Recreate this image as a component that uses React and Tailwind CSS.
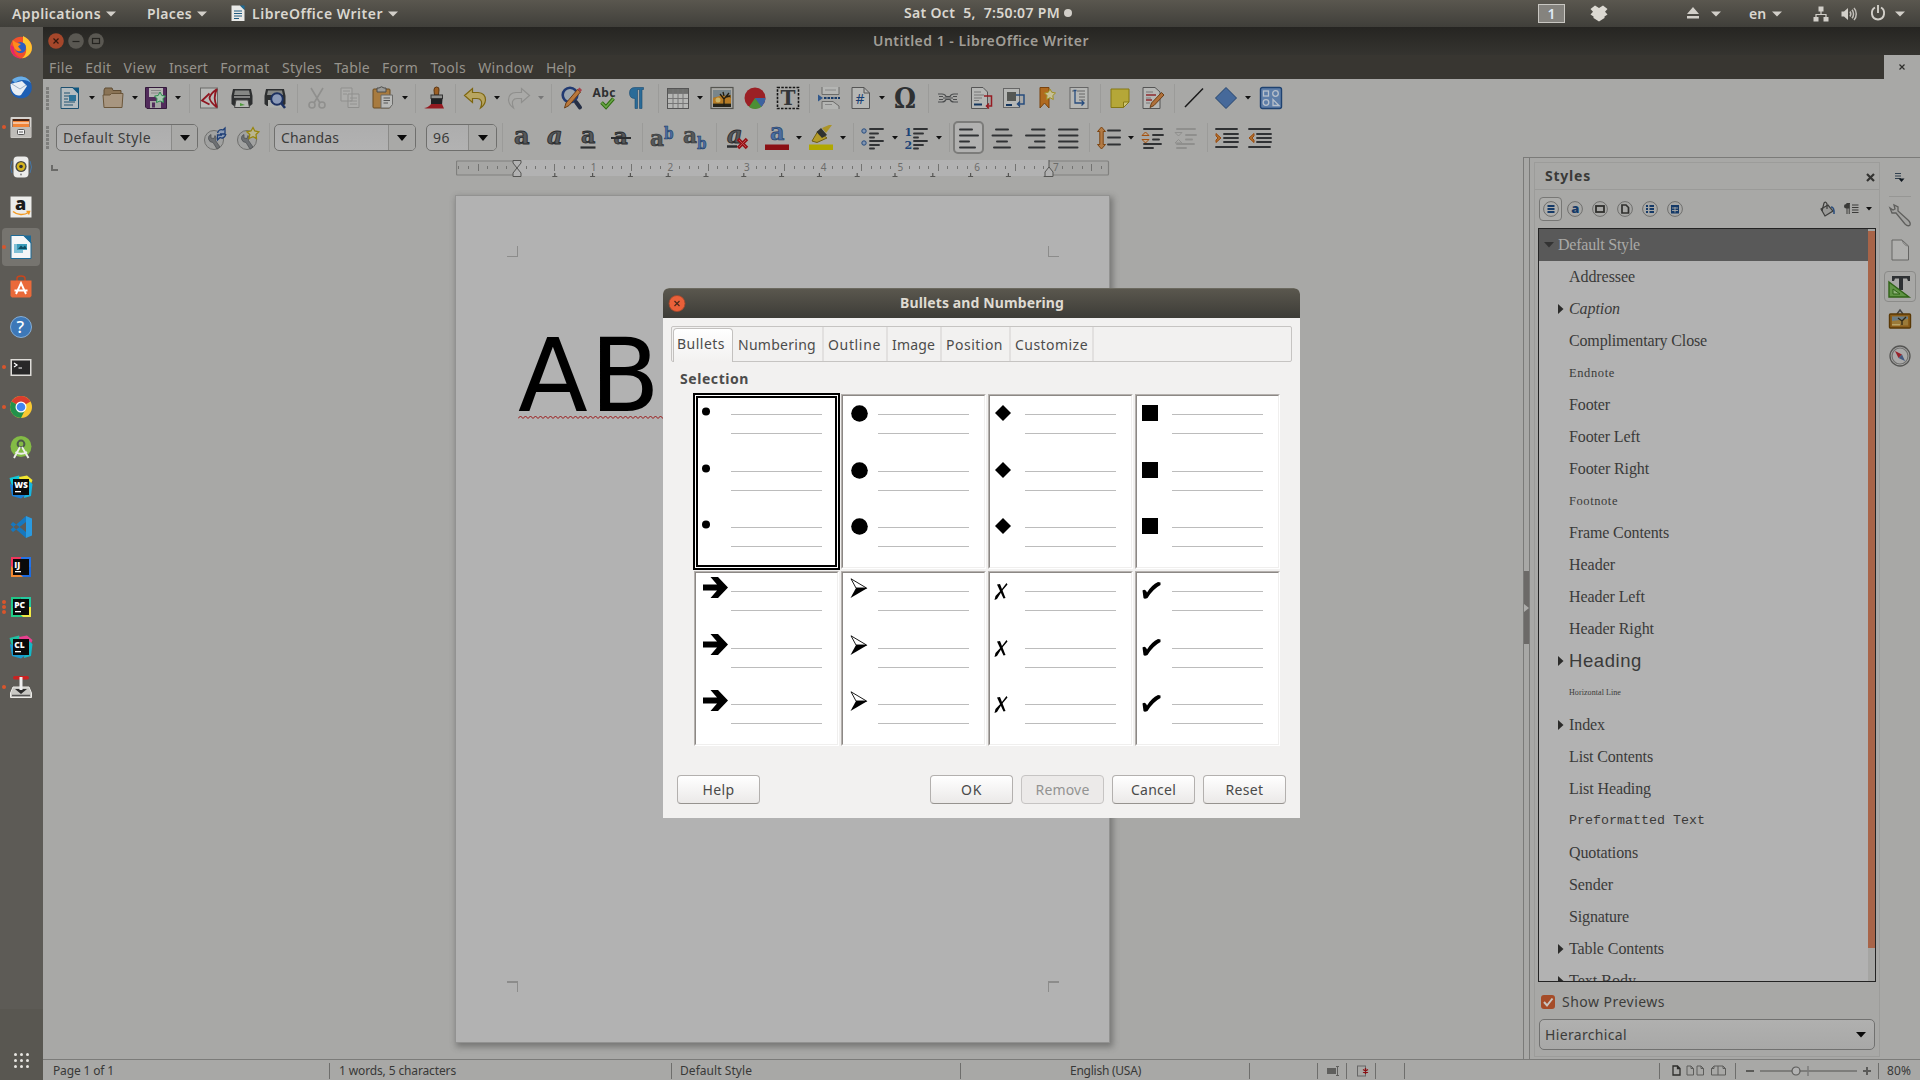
import React, { useLayoutEffect, useRef } from "react";

/* Text whose tracking is tuned so that the run takes exactly w pixels. */
function Fit({ w, className = "", children }) {
  const ref = useRef(null);
  useLayoutEffect(() => {
    const el = ref.current;
    el.style.letterSpacing = "0px";
    const natural = el.getBoundingClientRect().width;
    el.style.letterSpacing = (w - natural) / el.textContent.length + "px";
  }, [w]);
  return (
    <span ref={ref} className={"inline-block whitespace-pre " + className}>
      {children}
    </span>
  );
}

const Svg = ({ s = 24, h, vb = "0 0 24 24", className = "", children }) => (
  <svg width={s} height={h || s} viewBox={vb} fill="none" className={"block shrink-0 overflow-visible " + className}>
    {children}
  </svg>
);

/* ---------- top panel ---------- */

const Tri = ({ className = "" }) => (
  <Svg s={10} h={6} vb="0 0 10 6" className={className}>
    <path d="M0 0.5H10L5 5.5Z" fill="#d2cfc9" />
  </Svg>
);

function TopPanel() {
  return (
    <div className="flex h-[27px] shrink-0 items-center bg-linear-to-b from-[#5a574f] to-[#403f3a] text-[14px] leading-none font-semibold text-[#dad7d0]">
      <div className="flex w-[892px] items-center pl-[12px]">
        <Fit w={89}>Applications</Fit>
        <Tri className="ml-[5px]" />
        <Fit w={45} className="ml-[31px]">Places</Fit>
        <Tri className="ml-[5px]" />
        <Svg s={14} h={17} vb="0 0 14 17" className="ml-[24px]">
          <path d="M0.5 0.5H9L13.5 5V16H0.5Z" fill="#e9e9e7" />
          <path d="M9 0.5H13.5V5Z" fill="#1d6b97" />
          <path d="M3 6H11M3 8.5H11M3 11H11M3 13.500H8" stroke="#1d5a80" />
        </Svg>
        <Fit w={131} className="ml-[7px]">LibreOffice Writer</Fit>
        <Tri className="ml-[5px]" />
      </div>
      <div className="flex w-[646px] items-center pl-[12px]">
        <Fit w={156} className="-mt-[1px]">Sat Oct  5,  7:50:07 PM</Fit>
        <span className="-mt-[1px] ml-[4px] h-[8px] w-[8px] rounded-full bg-[#d2cfc9]" />
      </div>
      <div className="flex items-center">
        <span className="flex h-[19px] w-[27px] items-center justify-center border border-[#c9c7c2] bg-[#85837e] text-[#dfeaf5]">1</span>
        <Svg s={20} h={17} vb="0 0 20 17" className="ml-[24px]">
          <path d="M6 0.500L10 3L14 0.500L18.500 4L16 6.700L18.500 9.500L15.500 11.500V13L10 16.500L4.500 13V11.500L1.500 9.500L4 6.700L1.500 4Z" fill="#dcd9d2" />
        </Svg>
        <Svg s={12} h={12} vb="0 0 12 12" className="-mt-[2px] ml-[78px]">
          <path d="M6 0L12 7H0ZM0 9H12V11.500H0Z" fill="#d2cfc9" />
        </Svg>
        <Tri className="ml-[12px]" />
        <Fit w={17} className="ml-[28px]">en</Fit>
        <Tri className="ml-[6px]" />
        <Svg s={16} vb="0 0 16 16" className="ml-[31px]">
          <path d="M5.500 0.500H10.500V5.500H5.500ZM0.500 11H5.500V15.500H0.500ZM10.500 11H15.500V15.500H10.500Z" fill="#d2cfc9" />
          <path d="M8 5V8.500M3 11V8.500H13V11" stroke="#d2cfc9" strokeWidth="1.200" />
        </Svg>
        <Svg s={16} vb="0 0 16 16" className="ml-[12px]">
          <path d="M0.500 5.500H3L7 2V14L3 10.500H0.500Z" fill="#d2cfc9" />
          <path d="M9 5.500C10 7 10 9 9 10.500M11 3.800C13 6 13 10 11 12.200M13 2C16 5 16 11 13 14" stroke="#c2bfb9" strokeWidth="1.500" />
        </Svg>
        <Svg s={16} vb="0 0 16 16" className="-mt-[1px] ml-[13px]">
          <path d="M8 0V8" stroke="#d2cfc9" strokeWidth="1.900" />
          <path d="M5 2.500C0.500 5 0.500 14 8 14.500C15.500 14 15.500 5 11 2.500" stroke="#d2cfc9" strokeWidth="1.900" />
        </Svg>
        <Tri className="ml-[9px]" />
      </div>
    </div>
  );
}

/* ---------- dock ---------- */

const JB = ({ t, a, b, c, d, spiky }) => (
  <Svg>
    {spiky ? (
      <>
        <path d="M0.500 3L10 0.500L13 7L4 14Z" fill={a} />
        <path d="M10 2L18 0.500L23.500 5L20 14L12 10Z" fill={b} />
        <path d="M20 6L23.500 9L22 21L15 23L16 12Z" fill={c} />
        <path d="M1 9L8 12L18 19L12 23.500L3 21Z" fill={d} />
      </>
    ) : (
      <>
        <path d="M2 2H13L2 14Z" fill={a} />
        <path d="M12 2H22V14L12 10Z" fill={b} />
        <path d="M22 12V22H11L14 12Z" fill={c} />
        <path d="M2 11L14 22H2Z" fill={d} />
      </>
    )}
    <rect x="4" y="4" width="16" height="16" fill="#0a0a0a" />
    <text x="5.200" y="12.500" fontFamily="Open Sans, sans-serif" fontWeight="800" fontSize="8.500" fill="#fff">{t}</text>
    <rect x="6" y="16" width="6" height="1.300" fill="#fff" />
  </Svg>
);

const dock = [
  { i: <Svg className="-mt-[1px]">
      <circle cx="12" cy="12.500" r="10.800" fill="#f0512c" />
      <path d="M1.500 10C1 20 8 24 13 23.300C7 22 4 17 5 12Z" fill="#e5256b" />
      <path d="M14 1C22 5 24 11 22.500 16C21 20 18 22.500 13 23.300C19 19 18 10 14 8Z" fill="#ffc52f" />
      <circle cx="11.500" cy="12.500" r="5.500" fill="#2b5fc4" />
      <path d="M3.500 5L7 7.500L12 9L9 11.500L12.500 15.500C8 18 4 14 3.500 5Z" fill="#ff8a1c" />
    </Svg> },
  { i: <Svg className="-mt-[1px]">
      <circle cx="12" cy="12.500" r="10.800" fill="#1e5fb4" />
      <path d="M3 5C8 0 18 0 22 8C18 4 10 4 6 8Z" fill="#69aee8" />
      <path d="M1.500 9L13 6L18 11L12 20C7 22 2 18 1.500 9Z" fill="#e9eef4" />
      <path d="M3 9L11 14L17 10" stroke="#9fb2c8" />
    </Svg> },
  { n: 1, i: <Svg className="-mt-[1px]">
      <rect x="1.500" y="2" width="21" height="21" rx="1" fill="#d5d3cf" />
      <rect x="3.500" y="4" width="17" height="8" fill="#4b2413" />
      <path d="M4 6H20V12H4Z" fill="#f08437" /><path d="M4 8H20" stroke="#fff" />
      <rect x="2" y="12" width="20" height="10.500" fill="#bfbdb9" />
      <rect x="8.500" y="14.500" width="7" height="5" rx="1" fill="#f3f3f3" stroke="#555" /><path d="M10 17H14" stroke="#555" />
    </Svg> },
  { i: <Svg>
      <path d="M3 6Q0 12 3 18M21 6Q24 12 21 18" stroke="#4577a8" />
      <rect x="4.500" y="1.500" width="15" height="21" rx="4" fill="#ececea" />
      <circle cx="12" cy="11.500" r="5.600" fill="#4a4a44" /><circle cx="12" cy="11.500" r="4.200" fill="#d6b520" /><circle cx="12" cy="11.500" r="1.800" fill="#333" />
      <circle cx="12" cy="19.500" r="1" fill="#888" />
    </Svg> },
  { i: <Svg>
      <rect x="1.500" y="1.500" width="21" height="21" fill="#ececea" />
      <text x="6" y="15" fontFamily="Open Sans, sans-serif" fontWeight="800" fontSize="18" fill="#1b1b1b">a</text>
      <path d="M4 16.500C8 20 15 20.500 19.500 17.500M17.500 16.500H20.500L19.500 19.500" stroke="#f29a22" strokeWidth="1.500" />
    </Svg> },
  { n: 1, sel: 1, i: <Svg>
      <path d="M2 0.500H15L22 7.500V23.500H2Z" fill="#f4f6f7" stroke="#1d6b97" />
      <path d="M14 0.500H22V8.500Z" fill="#1d6b97" />
      <rect x="5" y="9" width="9" height="9" fill="#7fc0d6" /><rect x="8" y="9" width="10" height="6" fill="#3b9cba" />
      <path d="M9 14L12 10.500L14 12.500L16 10.500L18 14Z" fill="#0f4b60" />
    </Svg> },
  { i: <Svg>
      <path d="M8 6V3.500Q8 1 12 1Q16 1 16 3.500V6" stroke="#c8451c" strokeWidth="1.500" />
      <path d="M1.500 5.500H22.500V21L21 22.500H3L1.500 21Z" fill="#ea6a3a" />
      <path d="M7 19L12 8L17 19M5.500 15.500H18.500" stroke="#fff" strokeWidth="1.900" />
    </Svg> },
  { i: <Svg>
      <circle cx="12" cy="12" r="10.500" fill="#3d78b8" stroke="#86aed6" />
      <text x="7.500" y="18" fontFamily="Noto Sans, sans-serif" fontSize="17" fontWeight="500" fill="#fff">?</text>
    </Svg> },
  { n: 1, i: <Svg>
      <rect x="1.500" y="4" width="21" height="17" fill="#dedcd8" /><rect x="3" y="5.500" width="18" height="14" fill="#282828" />
      <path d="M5 8L8 10L5 12M9.500 13H13" stroke="#fff" strokeWidth="1.200" />
    </Svg> },
  { n: 1, i: <Svg>
      <circle cx="12" cy="12" r="11" fill="#f9c932" />
      <path d="M12 12L2.500 6.500A11 11 0 0 1 21.500 6.500Z" fill="#d93d2e" />
      <path d="M12 12L2.500 6.500A11 11 0 0 0 12 23L16.500 14Z" fill="#23914b" />
      <circle cx="12" cy="12" r="5.500" fill="#fff" /><circle cx="12" cy="12" r="4.300" fill="#4285f0" />
    </Svg> },
  { i: <Svg>
      <circle cx="12" cy="11.500" r="10.500" fill="#83bb45" />
      <circle cx="12" cy="9" r="3.400" stroke="#4c5a4a" strokeWidth="2" />
      <path d="M11 12L5 23M13 12L19.500 23M6.500 17Q12 20.500 18 17" stroke="#eeeeec" strokeWidth="1.900" />
    </Svg> },
  { i: <JB t="WS" a="#10c8d8" b="#f1e52f" c="#17b5e0" d="#1a80d8" spiky /> },
  { i: <Svg>
      <path d="M17 1L23 3.500V20.500L17 23Z" fill="#2a9ae0" />
      <path d="M17 1L1.500 14.500L4 17L17 7ZM17 23L1.500 9.500L4 7L17 17Z" fill="#1678bf" />
    </Svg> },
  { i: <JB t="IJ" a="#f0365c" b="#2473e8" c="#1d6be0" d="#f58a32" /> },
  { n: 3, i: <JB t="PC" a="#20c587" b="#24c8a0" c="#f0ea45" d="#20cf88" /> },
  { i: <JB t="CL" a="#1fc0a2" b="#e83f8e" c="#14b8c8" d="#1a9cd0" spiky /> },
  { n: 1, i: <Svg className="-mt-[1px]">
      <path d="M4 12H20L22.500 18V22.500H1.500V18Z" fill="#c9c8c4" stroke="#ecebe8" />
      <rect x="4" y="1" width="16" height="3.500" rx="1.700" fill="#c92222" />
      <path d="M6 14H18L12 19Z" fill="#2d2d2d" /><path d="M12 2V15" stroke="#efefef" strokeWidth="3" />
      <path d="M3 20.500H21" stroke="#555" strokeWidth="1.500" />
    </Svg> },
];

function Dock() {
  return (
    <div className="flex w-[43px] shrink-0 flex-col bg-[#5d5b56]">
      {dock.map((d, k) => (
        <div key={k} className="flex h-[40px] items-center pl-[2px]">
          <div className={"flex h-[38px] w-[38px] items-center rounded-[4px] " + (d.sel ? "bg-[#76746f]" : "")}>
            <span className="flex w-[7px] flex-col gap-[1px]">
              {Array.from({ length: d.n || 0 }, (_, j) => (
                <span key={j} className="h-[4px] w-[4px] rounded-full bg-[#d9552c]" />
              ))}
            </span>
            {d.i}
          </div>
        </div>
      ))}
      <div className="mt-auto flex h-[71px] items-end justify-center bg-[#595751] pb-[12px]">
        <div className="grid grid-cols-3 gap-[3px]">
          {Array.from({ length: 9 }, (_, k) => (
            <span key={k} className="h-[3px] w-[3px] rounded-full bg-[#e8e6e2]" />
          ))}
        </div>
      </div>
    </div>
  );
}

/* ---------- toolbar pieces ---------- */

const Cell = ({ children, className = "w-[33px]" }) => <span className={"flex shrink-0 items-center justify-center " + className}>{children}</span>;
const Arr = ({ dim, wide }) => (
  <Cell className={wide ? "w-[12px]" : "w-[11px]"}>
    <Svg s={6} h={4} vb="0 0 6 4"><path d="M0 0H6L3 3.500Z" fill={dim ? "#777" : "#111"} /></Svg>
  </Cell>
);
const Group = ({ className, children }) => (
  <div className={"flex h-[29px] shrink-0 items-center border-l border-[#9b9b99] pl-[2px] " + className}>{children}</div>
);
const Handle = () => (
  <div className="ml-[3px] flex w-[3px] flex-col gap-[1px]">
    {Array.from({ length: 6 }, (_, k) => <span key={k} className="h-[3px] w-[3px] bg-[#7e7e7c]" />)}
  </div>
);
const Doc = ({ children, x = 4, w = 16 }) => (
  <><rect x={x} y="2" width={w} height="20" fill="#b9bab8" stroke="#6b6b69" />{children}</>
);

const I = {
  neu: <Svg><path d="M3 1.500H15L20.500 7V22.500H3Z" fill="#b4bcc0" stroke="#1e506f" /><path d="M14 1.500H21V8.500Z" fill="#0f5780" /><path d="M6 7H12M6 10H17M6 13H10M6 16H17M6 19H15" stroke="#1e506f" /><rect x="11" y="9" width="7" height="6" fill="#2b7298" /></Svg>,
  open: <Svg><path d="M3 4L4 2H11L12 4.500H20V10H3Z" fill="#8a7355" stroke="#5f4c33" /><path d="M2 9H9L10.500 7.500H22L21 21.500H3Z" fill="#a89680" stroke="#6b563a" /></Svg>,
  save: <Svg><path d="M1.500 1.500H22.500V22.500H3L1.500 21Z" fill="#512b5b" stroke="#331a3a" /><rect x="5" y="2" width="14" height="9" fill="#b5b5b3" /><path d="M7 4.500H17M7 7H17" stroke="#888" /><rect x="6" y="15" width="11" height="7" fill="#a5a5a3" /><rect x="8" y="16.500" width="3" height="5" fill="#512b5b" /><path d="M16 6L17.800 9.500L21.500 10L19 12.700L19.500 16.500L16 15L12.500 16.500L13 12.700L10.500 10L14.200 9.500Z" fill="#a9c9b2" stroke="#2c8c4e" /></Svg>,
  pdf: <Svg><Doc x={3.5} w={17} /><path d="M20 3Q13 8 12.500 12Q13 16 20 21.500M20 3Q15.500 11 20 21.500M12.500 7.500L5 14.500L12.500 18.500" stroke="#8f1620" strokeWidth="1.800" /></Svg>,
  print: <Svg><path d="M3 3H21L22.500 10V18L20 20H4L1.500 18V10Z" fill="#2d2f30" /><path d="M5 4.500H19L20 9H4Z" fill="#858785" /><path d="M4 11H20" stroke="#9fa19f" strokeWidth="1.500" /><path d="M6 14H18L19.500 21.500H4.500Z" fill="#b7b9b6" stroke="#444" /><path d="M10 17L15 19L10 20Z" fill="#4e9a3c" /></Svg>,
  preview: <Svg><path d="M3 3H21L22.500 10V18L20 20H4L1.500 18V10Z" fill="#2d2f30" /><path d="M5 4.500H19L20 9H4Z" fill="#858785" /><path d="M5 14H19V21.500H5Z" fill="#b0b2af" /><circle cx="14" cy="13" r="5.800" fill="#8b9ab8" stroke="#1d3161" strokeWidth="2" /><path d="M18 17L22 22" stroke="#1d3161" strokeWidth="2.500" /></Svg>,
  cut: <Svg><path d="M6 2L15 17M18 2L9 17" stroke="#8f8f8d" strokeWidth="1.600" /><circle cx="7" cy="19" r="3" stroke="#8f8f8d" strokeWidth="1.600" /><circle cx="17" cy="19" r="3" stroke="#8f8f8d" strokeWidth="1.600" /></Svg>,
  copy: <Svg><path d="M3 2H14V15H3ZM10 8H21V21.500H10Z" fill="#adadab" stroke="#8f8f8d" /><path d="M5 5H12M5 8H9M12 12H19M12 15H19M12 18H19" stroke="#929290" /></Svg>,
  paste: <Svg><rect x="2" y="3" width="17" height="19" rx="1" fill="#a87b3f" stroke="#6a4c22" /><path d="M6 2H8Q10.500 -0.500 13 2H15V6H6Z" fill="#9a9b99" stroke="#4d4d4b" /><path d="M10 9H21.500V18.500L18.500 22H10Z" fill="#b9bab8" stroke="#6b6b69" /><path d="M12.500 12H19M12.500 14.500H19M12.500 17H17" stroke="#555" /></Svg>,
  brush: <Svg><path d="M13.500 1Q16.500 1 16 4L15.500 9H11.500L11 4Q11 1 13.500 1Z" fill="#9c5f24" stroke="#5c3510" /><rect x="8" y="9" width="11.500" height="3.500" fill="#8f8f8d" stroke="#333" /><path d="M8 13H19.500L19 19H8Z" fill="#1f2022" /><path d="M1 22C6 21.500 8 18 8 18L19 18L21 22.500H3Z" fill="#941a20" /></Svg>,
  undo: <Svg><path d="M1.500 9.500L9.500 2.500V6.500H15Q22.500 7 22.500 14Q22 19 17.500 22Q19.500 17 18 14.500Q17 12.500 14 12.500H9.500V16.500Z" fill="#b8a560" stroke="#7d6610" strokeWidth="1.200" /></Svg>,
  redo: <Svg><path d="M22.500 9.500L14.500 2.500V6.500H9Q1.500 7 1.500 14Q2 19 6.500 22Q4.500 17 6 14.500Q7 12.500 10 12.500H14.500V16.500Z" fill="#aaaaa8" stroke="#8f8f8d" strokeWidth="1.200" /></Svg>,
  find: <Svg><circle cx="11" cy="9" r="7.300" fill="#9ba5ae" stroke="#213a72" strokeWidth="2.600" /><path d="M17 16L21 21.500" stroke="#262f45" strokeWidth="4" strokeLinecap="round" /><path d="M5.500 22L7 17L18.500 3.500L21.500 6L10 19.500Z" fill="#b9783c" stroke="#6b3f17" /><path d="M18.500 3.500L20.500 1.500L23 4L21.500 6Z" fill="#a8444a" /></Svg>,
  abc: <Svg><text x="0.500" y="10.500" fontFamily="Noto Sans, sans-serif" fontWeight="700" fontSize="12" textLength="23" fill="#2e2f31">Abc</text><path d="M9.500 16.500L14 21L21.500 12.500" stroke="#2f6d10" strokeWidth="3.600" /><path d="M9.500 16.500L14 21L21.500 12.500" stroke="#6aa548" strokeWidth="1.600" /></Svg>,
  para: <Svg><path d="M18.500 1.500V3.500H17V22.500H14.500V3.500H12.500V22.500H10V12.500Q4.500 12.500 4.500 7Q4.500 1.500 10 1.500Z" fill="#2a6b98" stroke="#1a4a70" strokeWidth=".6" /></Svg>,
  table: <Svg><rect x="1.500" y="2.500" width="21" height="20" fill="#b6b7b5" stroke="#555" /><rect x="2" y="3" width="20" height="4" fill="#6f706e" /><path d="M2 7.500H22M2 12.500H22M2 17.500H22M7 3V22M12 3V22M17 3V22" stroke="#777" /></Svg>,
  image: <Svg><rect x="1" y="1.500" width="22" height="21" fill="#a9a9a5" stroke="#555550" strokeWidth="1.200" /><rect x="3" y="4" width="18" height="17" fill="#7c5c20" /><path d="M3 4H21V9L3 12Z" fill="#79868c" /><path d="M3 12L13 9L21 12V17H3Z" fill="#b57a25" /><circle cx="8" cy="14" r="2.500" fill="#c9b268" /><path d="M3 18H21V21H3Z" fill="#25231a" /><path d="M14 20V13L10 8M14 13L19 7M14 10L13 6M16 11L20 10" stroke="#211d12" strokeWidth="1.300" /></Svg>,
  pie: <Svg><circle cx="12" cy="12" r="10.500" fill="#9b2025" /><path d="M12 12L22.500 13A10.500 10.500 0 0 1 18 20.500Z" fill="#3d63a0" /><path d="M12 12L19 20.500A10.500 10.500 0 0 1 6 21Z" fill="#4d8f35" /><path d="M12 12H22.500L18.500 21Z" fill="#3d63a0" /></Svg>,
  tbox: <Svg><rect x="1.500" y="1.500" width="21" height="21" stroke="#151515" strokeWidth="1.600" strokeDasharray="2.500 1.300" /><text x="4.500" y="19" fontFamily="DejaVu Serif, serif" fontWeight="700" fontSize="20" textLength="15" lengthAdjust="spacingAndGlyphs" fill="#343638">T</text></Svg>,
  pbreak: <Svg><path d="M5 1V8.500H22V1M5 23V15.500H16L22 20V23" fill="#b4b5b3" stroke="#6b6b69" /><path d="M8 4H19M8 18.500H15" stroke="#888" /><path d="M1 8.500L6 12L1 15.500Z" fill="#31588c" /><path d="M7 12H23" stroke="#193b68" strokeWidth="2" strokeDasharray="2.500 1" /></Svg>,
  field: <Svg><path d="M3 1.500H15L20.500 7V22.500H3Z" fill="#b6b7b5" stroke="#555" /><path d="M15 1.500V7H20.500" stroke="#555" /><text x="6.500" y="18" fontFamily="Noto Sans, sans-serif" fontSize="14" fill="#173f74">#</text></Svg>,
  omega: <Svg><text x="1" y="22" fontFamily="DejaVu Serif, serif" fontWeight="700" fontSize="27" textLength="22" lengthAdjust="spacingAndGlyphs" fill="#2e3032">Ω</text></Svg>,
  link: <Svg><path d="M2 8H6Q9 8 10 10.500L14 10.500Q15 8 18 8H22M2 16H6Q9 16 10 13.500L14 13.500Q15 16 18 16H22M7 12H17M3 10.500H7M17 10.500H21M3 13.500H7M17 13.500H21" stroke="#4b4d4e" strokeWidth="1.200" /></Svg>,
  foot: <Svg><path d="M2.500 1.500H14L18.500 6V22.500H2.500Z" fill="#b6b7b5" stroke="#555" /><path d="M5 6H12M5 9H15M5 12H13M5 14.500H10" stroke="#777" /><path d="M5 18.500H13" stroke="#14365f" strokeWidth="2" /><path d="M15 10H22.500V20H18M20 17.500L17.500 20L20 22.500" stroke="#961b22" strokeWidth="1.500" /></Svg>,
  endn: <Svg><rect x="1.500" y="2.500" width="16" height="19" fill="#b6b7b5" stroke="#666" /><rect x="5" y="6" width="9" height="9" fill="#555753" /><path d="M4 19H10" stroke="#14365f" strokeWidth="2" /><path d="M14 9H22V18H16M18 15.500L15.500 18L18 20.500" stroke="#274c7d" strokeWidth="1.500" /></Svg>,
  mark: <Svg className="ml-[3px]"><path d="M4 1.500H13V22L8.500 17L4 22Z" fill="#b06a1f" stroke="#7a430c" /><path d="M14 3L15.700 6.200L19.500 7L16.800 9.500L17.300 13.500L14 11.700L10.500 13.500L11 9.500L8.500 7L12.300 6.200Z" fill="#c6c19a" stroke="#a09020" /></Svg>,
  cross: <Svg><rect x="3" y="1.500" width="18" height="21" fill="#b6b7b5" stroke="#666" /><path d="M10 5H18M12 8H18M12 11H18M12 14H18M5 5H7" stroke="#666" /><path d="M6.500 4.500H9.500M8 5V17H17M14.500 14.500L17 17L14.500 19.500" stroke="#274c7d" strokeWidth="1.300" /></Svg>,
  note: <Svg><path d="M3 3H21V16L15.500 21.500H3Z" fill="#b5a738" stroke="#857814" /><path d="M21 16H15.500V21.500Z" fill="#cec676" stroke="#857814" /></Svg>,
  track: <Svg><path d="M2 1.500H14L19 6V22.500H2Z" fill="#b6b7b5" stroke="#555" /><path d="M5 6H12M5 12H10M5 17H9M13 15H17" stroke="#777" /><path d="M5 9H15M5 14H11" stroke="#8f2b2f" strokeWidth="1.500" /><path d="M9 21.500L10.500 17L20.500 6.500L23 9L13 19.500Z" fill="#b0703a" stroke="#6b3f17" /></Svg>,
  line: <Svg><path d="M3 21L21 2.500" stroke="#191919" strokeWidth="1.500" /></Svg>,
  dia: <Svg><path d="M12 1.500L22.500 12L12 22.500L1.500 12Z" fill="#46699a" stroke="#24446f" /></Svg>,
  shapes: <Svg><rect x="1.500" y="1.500" width="21" height="21" rx="2" fill="#5e7ea8" stroke="#1f4270" strokeWidth="1.400" /><g stroke="#b7c0cb" strokeWidth="1.300"><rect x="4.500" y="5" width="5" height="5" /><circle cx="16.500" cy="7.500" r="2.800" /><circle cx="7" cy="16.500" r="2.800" /><path d="M14 19.500V13.500L20 19.500Z" /></g></Svg>,
};

const A = ({ t, italic, children, size = 24, x = 4, fill = "#55585a", y = 19 }) => (
  <Svg>
    <text x={x} y={y} fontFamily="DejaVu Serif, serif" fontWeight="700" fontStyle={italic ? "italic" : "normal"} fontSize={size} fill={fill} stroke="#2b2d2f" strokeWidth=".9">{t}</text>
    {children}
  </Svg>
);
const Bars = ({ list }) => (
  <Svg>
    {list.map(([x1, x2], k) => (
      <path key={k} d={`M${x1} ${3.5 + k * 6}H${x2}`} stroke="#303234" strokeWidth="2" strokeLinecap="round" />
    ))}
  </Svg>
);
const ln = (pts, c = "#303234") => pts.map(([x, y, w], k) => <path key={k} d={`M${x} ${y}h${w}`} stroke={c} strokeWidth="1.9" strokeLinecap="round" />);

const Wrench = () => (
  <>
    <circle cx="11" cy="14" r="9.500" fill="#a1a2a1" stroke="#6f6f6d" />
    <path d="M5.500 13Q5 9.500 8 8.500L8 12L11 12.500L12 9.500Q14 12 12.500 14.500L17 21L14 23L10 16.500Q6.500 16.500 5.500 13Z" fill="#6d7073" stroke="#4a4d50" strokeWidth=".7" />
  </>
);

const F = {
  upd: <Svg><Wrench /><path d="M14.500 7Q16 2.500 20 4L22 2V8H17M23 8Q21 13.500 17 11.500L14.500 14V9H19" stroke="#1d3d75" strokeWidth="1.300" fill="#8c9cb5" /></Svg>,
  neu: <Svg><Wrench /><path d="M17 1.500L18.800 5L22.800 5.800L20 8.500L20.500 12.500L17 10.700L13 12.500L13.800 8.500L11 5.800L15 5Z" fill="#b9b590" stroke="#97850d" strokeWidth="1.300" /></Svg>,
  clear: <A t="a" italic size={24} x={2} y={17}><path d="M2 20.500H12" stroke="#2b2d2f" strokeWidth="2.500" /><path d="M13 13L22 22M22 13L13 22" stroke="#951318" strokeWidth="3.500" /><path d="M14 14L21 21M21 14L14 21" stroke="#c14a4e" strokeWidth="1" /></A>,
  sup: <Svg><text x="0" y="20" fontFamily="DejaVu Serif, serif" fontWeight="700" fontSize="22" textLength="14" lengthAdjust="spacingAndGlyphs" fill="#55585a" stroke="#2b2d2f" strokeWidth=".6">a</text><text x="14" y="13" fontFamily="DejaVu Serif, serif" fontWeight="700" fontSize="17" textLength="9.500" lengthAdjust="spacingAndGlyphs" fill="#4a6da0" stroke="#183763" strokeWidth=".6">b</text></Svg>,
  sub: <Svg><text x="0" y="17" fontFamily="DejaVu Serif, serif" fontWeight="700" fontSize="22" textLength="14" lengthAdjust="spacingAndGlyphs" fill="#55585a" stroke="#2b2d2f" strokeWidth=".6">a</text><text x="14" y="23" fontFamily="DejaVu Serif, serif" fontWeight="700" fontSize="17" textLength="9.500" lengthAdjust="spacingAndGlyphs" fill="#4a6da0" stroke="#183763" strokeWidth=".6">b</text></Svg>,
  color: <Svg h={26} vb="0 -1 24 26"><text x="5" y="13.500" fontFamily="DejaVu Serif, serif" fontWeight="700" fontSize="24" textLength="14.500" lengthAdjust="spacingAndGlyphs" fill="#4a6da0" stroke="#183763" strokeWidth=".6">a</text><rect x="0" y="18.500" width="24" height="5.500" fill="#8b1014" /></Svg>,
  hi: <Svg h={26} vb="0 -1 24 26"><path d="M3 15L9 5L18 12L8 16.500Z" fill="#b49b28" stroke="#6f5e10" /><path d="M7.500 6L12 2L18 9L13 12Z" fill="#30322f" /><path d="M13 2L20 -1H23L17 7Z" fill="#ab9428" /><rect x="0" y="18.500" width="24" height="5.500" fill="#b0a800" /></Svg>,
  bul: <Svg><circle cx="3" cy="5" r="2.200" fill="#8295b1" stroke="#274c7d" /><circle cx="3" cy="17" r="2.200" fill="#8295b1" stroke="#274c7d" />{ln([[9, 3, 13], [9, 7.5, 8], [9, 11.5, 4], [9, 15, 13], [9, 19, 9], [9, 22.5, 4]])}</Svg>,
  num: <Svg><g fontFamily="DejaVu Serif, serif" fontWeight="700" fontSize="11" fill="#1d4477"><text x="-0.500" y="9.500">1</text><text x="-0.500" y="23">2</text></g>{ln([[9, 3, 13], [9, 7.5, 9], [9, 11.5, 4], [9, 15, 13], [9, 19, 9], [9, 22.5, 4]])}</Svg>,
  sp: <Svg><path d="M4.500 1L8.500 5.500H6.200V18.500H8.500L4.500 23L0.500 18.500H2.800V5.500H0.500Z" fill="#b27b46" stroke="#7d4511" />{ln([[11, 4.5, 12], [11, 11.5, 12], [11, 18.5, 12]])}</Svg>,
  spi: <Svg><path d="M4.500 6L8 9.500H1ZM4.500 17L8 13.500H1Z" fill="#b8a48c" stroke="#a3500f" />{ln([[3, 3, 18], [12, 9, 10], [12, 13.500, 6], [3, 18, 17], [3, 22, 9]])}</Svg>,
  spd: <Svg><path d="M4.500 10L8 6.500H1ZM4.500 13.500L8 17H1Z" stroke="#8f8f8d" />{ln([[3, 3, 18], [12, 9, 10], [12, 13.500, 6], [3, 18, 17], [3, 22, 9]], "#8f8f8d")}</Svg>,
  inc: <Svg><path d="M1 7.500L6 12L1 16.500V14L3 12L1 10Z" fill="#b07030" stroke="#9a4a0c" />{ln([[1, 3, 21], [9, 8, 14], [9, 12, 14], [9, 16, 14], [1, 21, 21]])}</Svg>,
  dec: <Svg><path d="M6 7.500L1 12L6 16.500V14L4 12L6 10Z" fill="#b07030" stroke="#9a4a0c" />{ln([[1, 3, 21], [9, 8, 14], [9, 12, 14], [9, 16, 14], [1, 21, 21]])}</Svg>,
};

const Combo = ({ className, btn, children }) => (
  <div className={"flex h-[27px] shrink-0 items-center rounded-[5px] border border-[#6f6f6d] bg-linear-to-b from-[#adadad] to-[#b2b2b2] text-[14px] text-[#3b3b3a] " + className}>
    <span className="flex-1 pl-[6px]">{children}</span>
    <span className={"flex h-full items-center justify-center rounded-r-[4px] border-l border-[#8a8a88] bg-[#a9a9a7] " + btn}>
      <Svg s={10} h={6} vb="0 0 10 6"><path d="M0 0H10L5 6Z" fill="#0a0a0a" /></Svg>
    </span>
  </div>
);

function Toolbars() {
  return (
    <>
      <div className="flex h-[39px] shrink-0 items-center pb-[1px]">
        <div className="flex w-[146px] items-center">
          <Handle />
          <Cell className="ml-[5px] w-[32px]">{I.neu}</Cell><Arr />
          <Cell className="w-[32px]">{I.open}</Cell><Arr />
          <Cell className="w-[32px]">{I.save}</Cell><Arr />
        </div>
        <Group className="w-[108px]"><Cell>{I.pdf}</Cell><Cell>{I.print}</Cell><Cell>{I.preview}</Cell></Group>
        <Group className="w-[118px]"><Cell>{I.cut}</Cell><Cell>{I.copy}</Cell><Cell>{I.paste}</Cell><Arr /></Group>
        <Group className="w-[40px]"><Cell>{I.brush}</Cell></Group>
        <Group className="w-[96px]"><Cell>{I.undo}</Cell><Arr /><Cell>{I.redo}</Cell><Arr dim /></Group>
        <Group className="w-[107px]"><Cell>{I.find}</Cell><Cell>{I.abc}</Cell><Cell>{I.para}</Cell></Group>
        <Group className="w-[151px]"><Cell>{I.table}</Cell><Arr /><Cell>{I.image}</Cell><Cell>{I.pie}</Cell><Cell>{I.tbox}</Cell></Group>
        <Group className="w-[119px]"><Cell>{I.pbreak}</Cell><Cell className="w-[31px]">{I.field}</Cell><Arr wide /><Cell>{I.omega}</Cell></Group>
        <Group className="w-[172px]"><Cell>{I.link}</Cell><Cell>{I.foot}</Cell><Cell>{I.endn}</Cell><Cell>{I.mark}</Cell><Cell className="w-[32px]">{I.cross}</Cell></Group>
        <Group className="w-[74px]"><Cell>{I.note}</Cell><Cell>{I.track}</Cell></Group>
        <Group className="w-[120px]"><Cell>{I.line}</Cell><Cell className="w-[32px]">{I.dia}</Cell><Arr wide /><Cell>{I.shapes}</Cell></Group>
      </div>
      <div className="flex h-[39px] shrink-0 items-center">
        <div className="flex w-[226px] items-center">
          <Handle />
          <Combo className="ml-[7px] w-[142px]" btn="w-[26px]"><Fit w={88}>Default Style</Fit></Combo>
          <Cell>{F.upd}</Cell><Cell>{F.neu}</Cell>
        </div>
        <Group className="w-[233px]">
          <Combo className="ml-[2px] w-[142px]" btn="w-[27px]"><Fit w={58}>Chandas</Fit></Combo>
          <Combo className="ml-[10px] w-[71px]" btn="w-[28px]"><Fit w={17}>96</Fit></Combo>
        </Group>
        <Group className="w-[140px]">
          <Cell><A t="a" y={18} /></Cell>
          <Cell><A t="a" y={18} italic /></Cell>
          <Cell><A t="a" size={22} x={5} y={17}><path d="M4.500 21.500H19.500" stroke="#2b2d2f" strokeWidth="2.200" /></A></Cell>
          <Cell><A t="a" size={22} x={4.5} y={18}><path d="M2 12H22" stroke="#2b2d2f" strokeWidth="2" /></A></Cell>
        </Group>
        <Group className="w-[74px]"><Cell>{F.sup}</Cell><Cell>{F.sub}</Cell></Group>
        <Group className="w-[41px]"><Cell className="w-[35px]">{F.clear}</Cell></Group>
        <Group className="w-[96px]"><Cell>{F.color}</Cell><Arr /><Cell>{F.hi}</Cell><Arr /></Group>
        <Group className="w-[96px]"><Cell>{F.bul}</Cell><Arr /><Cell>{F.num}</Cell><Arr /></Group>
        <Group className="w-[140px]">
          <Cell>
            <span className="flex h-[33px] w-[31px] shrink-0 items-center justify-center rounded-[5px] border-2 border-[#7c7c7a] bg-[#b1b1b0]">
              <Bars list={[[3, 15], [3, 21], [3, 12], [3, 18]]} />
            </span>
          </Cell>
          <Cell><Bars list={[[6, 18], [2.5, 21.500], [7, 17], [4, 20]]} /></Cell>
          <Cell><Bars list={[[9, 21.500], [3, 21.500], [12, 21.500], [6, 21.500]]} /></Cell>
          <Cell><Bars list={[[3, 21.500], [3, 21.500], [3, 21.500], [3, 21.500]]} /></Cell>
        </Group>
        <Group className="w-[118px]"><Cell>{F.sp}</Cell><Arr /><Cell>{F.spi}</Cell><Cell>{F.spd}</Cell></Group>
        <Group className="w-[80px]"><Cell>{F.inc}</Cell><Cell>{F.dec}</Cell></Group>
      </div>
    </>
  );
}

/* ---------- document ---------- */

const EIGHTH = 76.7 / 8;

function Ruler() {
  const zero = 61;
  const ticks = [];
  for (let k = -6; k <= 61; k++) {
    if (k % 8 === 0) continue;
    ticks.push(<path key={k} d={`M${Math.round(zero + k * EIGHTH) - 0.5} ${k % 4 === 0 ? 4 : 6}V${k % 4 === 0 ? 11 : 9}`} stroke="#737371" />);
  }
  const stops = Array.from({ length: 14 }, (_, k) => zero + 37.8 * (k + 1));
  return (
    <svg width="654" height="18" viewBox="0 0 654 18" fill="none" className="block">
      <rect x="0.500" y="1" width="652" height="14" rx="1" fill="#a6a6a4" stroke="#80807e" strokeWidth="1.200" />
      <rect x="61" y="0" width="532" height="16" fill="#b2b2b2" />
      {ticks}
      {[1, 2, 3, 4, 5, 6, 7].map((n) => (
        <text key={n} x={zero + n * 76.7 - 3 + (n === 7 ? 2 : 0)} y="11" fontFamily="Noto Sans, sans-serif" fontSize="10" fill="#6c6c6a">{n}</text>
      ))}
      {stops.map((x) => <path key={x} d={`M${x - 2.5} 16.500h5M${x} 13v3`} stroke="#555553" strokeWidth="1.200" />)}
      <path d="M57 0.500H65V3L57 13V16.500H65V13L57 3Z" fill="#b2b2b2" stroke="#555553" />
      <path d="M589 16.500V12L593 7L597 12V16.500Z" fill="#b2b2b2" stroke="#555553" /><path d="M593 0V8" stroke="#555553" />
    </svg>
  );
}

const Corner = ({ className }) => <span className={"block h-[11px] w-[11px] border-[#8c8c8b] " + className} />;

function DocArea() {
  return (
    <div className="flex w-[1480px] flex-col overflow-hidden">
      <div className="flex h-[38px] shrink-0 items-start pt-[3px]">
        <span className="mt-[5px] ml-[8px] h-[6px] w-[7px] border-b-2 border-l-2 border-[#6a6a68]" />
        <div className="ml-[398px]"><Ruler /></div>
      </div>
      <div className="ml-[412px] flex h-[848px] w-[655px] shrink-0 flex-col border border-[#929291] bg-[#b2b2b2] pt-[50px] shadow-[2px_3px_6px_1px_rgba(60,60,60,0.45)]">
        <div className="flex justify-between pr-[50px] pl-[51px]">
          <Corner className="border-r border-b" />
          <Corner className="border-b border-l" />
        </div>
        <div className="mt-[61px] ml-[62px] h-[103px]">
          <div className="h-[97px] pt-[6px] text-[102px] leading-[104px] text-black font-['DejaVu_Sans',sans-serif]"><Fit w={144}>AB</Fit></div>
          <svg width="160" height="5" viewBox="0 0 160 5" fill="none" className="block">
            <path d={"M0 3.500" + "l2.500 -2.500l2.500 2.500".repeat(32)} stroke="#9a1414" />
          </svg>
        </div>
        <div className="mt-auto mb-[50px] flex justify-between pr-[50px] pl-[51px]">
          <Corner className="border-t-2 border-r" />
          <Corner className="border-t-2 border-l" />
        </div>
      </div>
    </div>
  );
}

/* ---------- sidebar ---------- */

const S = "text-[16px]";
const rows = [
  ["Addressee", 66, S], ["Caption", 51, S + " italic", 1], ["Complimentary Close", 138, S], ["Endnote", 46, "text-[12.5px]"],
  ["Footer", 41, S], ["Footer Left", 71, S], ["Footer Right", 80, S], ["Footnote", 49, "text-[12.5px]"],
  ["Frame Contents", 100, S], ["Header", 46, S], ["Header Left", 76, S], ["Header Right", 85, S],
  ["Heading", 73, "text-[18.5px] font-['Liberation_Sans',sans-serif]", 1], ["Horizontal Line", 52, "text-[8px]"],
  ["Index", 36, S, 1], ["List Contents", 84, S], ["List Heading", 82, S],
  ["Preformatted Text", 136, "text-[13.3px] font-['Liberation_Mono',monospace]"], ["Quotations", 69, S], ["Sender", 44, S],
  ["Signature", 60, S], ["Table Contents", 95, S, 1], ["Text Body", 67, S, 1],
];

const Ring = ({ children }) => (
  <Svg s={16} vb="0 0 16 16"><circle cx="8" cy="8" r="7.400" stroke="#6f6f6d" />{children}</Svg>
);

function Sidebar() {
  return (
    <div className="flex w-[397px] border-t border-l border-[#7b7b79]">
      <div className="flex w-[6px] flex-col border-r border-[#7b7b79]">
        <div className="mt-[413px] flex h-[73px] items-center bg-[#6c6a68]">
          <Svg s={5} h={8} vb="0 0 5 8"><path d="M0 0L5 4L0 8Z" fill="#adadab" /></Svg>
        </div>
      </div>
      <div className="mt-[4px] mb-[2px] ml-[4px] flex w-[346px] flex-col border border-[#9c9c9a]">
        <div className="flex h-[27px] items-center border-b border-[#9a9a98] pl-[10px] text-[14px] leading-none font-bold text-[#3a3a38]">
          <Fit w={46}>Styles</Fit>
          <Svg s={9} vb="0 0 9 9" className="mt-[3px] ml-[275px]"><path d="M1 1L8 8M8 1L1 8" stroke="#333331" strokeWidth="2.200" /></Svg>
        </div>
        <div className="flex h-[38px] items-center pb-[1px] pl-[4px]">
          <span className="flex h-[24px] w-[23px] items-center justify-center rounded-[4px] border border-[#777775] bg-[#adadab]">
            <Ring><path d="M4.500 5H11.500M4.500 8H11.500M4.500 11H11.500" stroke="#153a68" strokeWidth="1.900" /></Ring>
          </span>
          <div className="ml-[5px] flex gap-[9px]">
            <Ring><text x="4.200" y="12" fontFamily="Noto Sans, sans-serif" fontWeight="900" fontSize="13" fill="#153a68">a</text></Ring>
            <Ring><rect x="4" y="5" width="8" height="6" stroke="#30302e" strokeWidth="1.800" /></Ring>
            <Ring><path d="M5 4H9L11.500 6.500V12H5Z" stroke="#30302e" strokeWidth="1.700" /></Ring>
            <Ring><path d="M4 5H6M4 8H6M4 11H6M7.500 5H12M7.500 8H12M7.500 11H12" stroke="#153a68" strokeWidth="1.900" /></Ring>
            <Ring><rect x="4" y="4" width="8" height="8.500" fill="#153a68" /><path d="M5 7H11M5 9.500H11M8 6V11.500" stroke="#a8a8a6" strokeWidth=".9" /></Ring>
          </div>
          <Svg s={16} vb="0 0 16 16" className="ml-[136px]"><path d="M2 8L9 4L14 10L6 15Z" stroke="#3e3e3c" strokeWidth="1.200" fill="#9a9a98" /><path d="M3 10L5 2Q7 0 8 3V8" stroke="#3e3e3c" strokeWidth="1.200" /><path d="M12 6Q15.500 6 15 13" stroke="#274c7d" strokeWidth="1.500" /></Svg>
          <Svg s={16} h={12} vb="0 0 16 12" className="ml-[8px]"><path d="M3.500 1H6.500V5.500H3.500Q1 5.500 1 3Q1 1 3.500 1Z" fill="#3b3b39" /><path d="M7 0.500H3.500M4 0.500V11M6.200 0.500V11M9 2H15.500M9 4.500H15.500M9 7H15.500M9 9.500H15.500" stroke="#3b3b39" /></Svg>
          <Svg s={6} h={4} vb="0 0 6 4" className="ml-[7px]"><path d="M0 0H6L3 3.500Z" fill="#111" /></Svg>
        </div>
        <div className="ml-[3px] flex h-[754px] w-[338px] border border-[#232323] bg-[#b2b2b2]">
          <div className="w-[329px] overflow-hidden text-[#3a3a39] font-['Liberation_Serif',serif]">
            <div className="flex h-[32px] items-center bg-[#595959] pl-[5px] text-[16px] leading-none text-[#a9a9a7]">
              <Svg s={10} h={6} vb="0 0 10 6"><path d="M0 0H10L5 5.500Z" fill="#333" /></Svg>
              <Fit w={82} className="ml-[4px]">Default Style</Fit>
            </div>
            {rows.map(([t, w, c, exp]) => (
              <div key={t} className="flex h-[32px] items-center leading-none">
                <span className="w-[30px] pl-[19px]">
                  {exp && <Svg s={6} h={10} vb="0 0 6 10"><path d="M0 0L5.500 5L0 10Z" fill="#2b2b2a" /></Svg>}
                </span>
                <Fit w={w} className={c}>{t}</Fit>
              </div>
            ))}
          </div>
          <div className="flex-1 bg-[#a5a5a3] pt-[2px]"><div className="h-[717px] bg-[#a86448]" /></div>
        </div>
        <div className="mt-[13px] ml-[6px] flex h-[14px] items-center text-[14px] leading-none text-[#3c3c3a]">
          <Svg s={14} vb="0 0 14 14"><rect width="14" height="14" rx="3" fill="#a54c28" /><path d="M3 7L6 10.500L11.500 3.500" stroke="#c9c5c0" strokeWidth="2" /></Svg>
          <Fit w={103} className="ml-[7px]">Show Previews</Fit>
        </div>
        <div className="mt-[10px] ml-[4px] flex h-[31px] w-[336px] items-center justify-between rounded-[5px] border border-[#717170] bg-linear-to-b from-[#b0b0af] to-[#a8a8a7] pr-[8px] pl-[5px] text-[14px] leading-none text-[#3c3c3a]">
          <Fit w={82}>Hierarchical</Fit>
          <Svg s={10} h={6} vb="0 0 10 6"><path d="M0 0H10L5 5.500Z" fill="#0a0a0a" /></Svg>
        </div>
      </div>
      <div className="flex w-[40px] flex-col items-center pt-[14px]">
        <Svg s={10} h={11} vb="0 0 10 11"><path d="M0 1.500H6M0 4H6M0 6.500H6" stroke="#30404f" strokeWidth="1.200" /><path d="M3.500 6.500H9.500L6.500 10Z" fill="#101820" /></Svg>
        <span className="mt-[13px] h-[1px] w-[22px] bg-[#969694]" />
        <Svg className="mt-[7px]"><path d="M2 4L4 9L8 9L17 20Q20 23 22 21Q23 19 20 16L10 7V3L6 1L7 5L5 6Z" stroke="#5f5f5d" strokeWidth="1.300" fill="#a3a3a1" /></Svg>
        <Svg className="mt-[10px]"><path d="M4 2H14L20.500 8V22H4Z" fill="#b0b0ae" stroke="#666664" /><path d="M14 2Q16 8 20.500 8" stroke="#777775" /></Svg>
        <span className="mt-[9px] flex h-[31px] w-[32px] items-center justify-center rounded-[4px] border border-[#8b8b89]">
          <Svg><path d="M4 1H22V6H20L19 3.500H15V15H11V3.500H7L6 6H4Z" fill="#2e3134" /><path d="M1 7L21 22H1Z" fill="#5f9444" stroke="#2f6216" strokeWidth="1.400" /><path d="M5 14L12 19H5Z" fill="#8fb27c" stroke="#2f6216" /></Svg>
        </span>
        <Svg className="mt-[6px]"><path d="M9 6L12 2L15 6" stroke="#444" strokeWidth="1.500" /><rect x="1.500" y="6" width="21" height="14" rx="1" fill="#8a5d1a" stroke="#5a3906" strokeWidth="1.400" /><rect x="4" y="8.500" width="16" height="9" fill="#9b7a38" /><path d="M4 8.500H20V11L4 13Z" fill="#6c7c84" /><path d="M14 17V13L10 10M14 13L18 9" stroke="#2e2714" strokeWidth="1.300" /><path d="M4 16H12V17.500H4Z" fill="#b9a468" /></Svg>
        <Svg className="mt-[12px]"><circle cx="12" cy="12" r="10" fill="#aaaaa9" stroke="#555553" strokeWidth="1.300" /><circle cx="12" cy="12" r="8" stroke="#70706e" strokeWidth="1.200" /><path d="M7 7L14 10.500L10.500 14Z" fill="#98222a" /><path d="M17 17L14 10.500L10.500 14Z" fill="#44597f" /></Svg>
      </div>
    </div>
  );
}

/* ---------- status bar ---------- */

const Seg = ({ className, children }) => (
  <div className={"flex h-[16px] shrink-0 items-center border-r border-[#6e6e6c] " + className}>{children}</div>
);

function StatusBar() {
  return (
    <div className="flex h-[21px] shrink-0 items-center border-t border-[#7b7b79] pt-[1px] text-[12px] leading-none text-[#383837]">
      <Seg className="w-[287px] pl-[10px]"><Fit w={61}>Page 1 of 1</Fit></Seg>
      <Seg className="w-[342px] pl-[9px]"><Fit w={117}>1 words, 5 characters</Fit></Seg>
      <Seg className="w-[289px] pl-[8px]"><Fit w={72}>Default Style</Fit></Seg>
      <Seg className="w-[289px] pl-[109px]"><Fit w={71}>English (USA)</Fit></Seg>
      <Seg className="w-[68px]" />
      <Seg className="w-[29px] pl-[9px]"><Svg s={13} h={10} vb="0 0 13 10"><rect x="0" y="2" width="9" height="6" fill="#5f5f5d" /><path d="M10.500 0.500V9.500M9 0.500H12M9 9.500H12" stroke="#5f5f5d" /></Svg></Seg>
      <Seg className="w-[29px] pl-[10px]"><Svg s={12} vb="0 0 12 12"><rect x="0.500" y="1" width="8" height="10" stroke="#666" /><path d="M8.500 3V9M6 4.500L11 7.500M11 4.500L6 7.500" stroke="#8b1014" strokeWidth="1.300" /></Svg></Seg>
      <Seg className="w-[29px]" />
      <Seg className="w-[255px]" />
      <Seg className="w-[76px] pl-[12px]">
        <Svg s={56} h={11} vb="0 0 56 11">
          <path d="M1 1H5.500L8 3.500V10H1ZM5.500 1V3.500H8" stroke="#2d2d2b" strokeWidth="1.300" />
          <path d="M15 1H19L21.500 3.500V10H15ZM19 1V3.500H21.500M25 1H29L31.500 3.500V10H25ZM29 1V3.500H31.500M39.500 10V3.500L42 1H46V10ZM42 1V3.500H39.500M46 1H51L53.500 3.500V10H46M51 1V3.500H53.500" stroke="#5c5c5a" />
        </Svg>
      </Seg>
      <Seg className="w-[143px] pl-[10px]">
        <Svg s={126} h={12} vb="0 0 126 12">
          <path d="M0 6H8M117 6H125M121 2V10" stroke="#5b5b59" strokeWidth="2" />
          <path d="M14 6H111" stroke="#7d7d7b" strokeWidth="1.800" /><path d="M62 1V11" stroke="#7d7d7b" strokeWidth="1.500" />
          <circle cx="50" cy="6" r="4" fill="#b2b2b2" stroke="#5b5b59" strokeWidth="1.200" />
        </Svg>
      </Seg>
      <span className="pl-[8px]"><Fit w={24}>80%</Fit></span>
    </div>
  );
}

/* ---------- dialog ---------- */

const bullets = {
  dot: { c: "pl-[8px] pt-[13px]", g: <Svg s={8} vb="0 0 8 8"><circle cx="4" cy="4.500" r="4" fill="#000" /></Svg> },
  disc: { c: "pl-[10px] pt-[11px]", g: <Svg s={17} vb="0 0 17 17"><circle cx="8.500" cy="8.500" r="8.300" fill="#000" /></Svg> },
  diamond: { c: "pl-[7px] pt-[11px]", g: <Svg s={16} vb="0 0 16 16"><path d="M8 0L16 8L8 16L0 8Z" fill="#000" /></Svg> },
  square: { c: "pl-[7px] pt-[11px]", g: <Svg s={16} vb="0 0 16 16"><path d="M0 0H16V16H0Z" fill="#000" /></Svg> },
  arrow: { c: "pl-[9px] pt-[6px]", g: <Svg s={25} h={21} vb="0 0 25 21"><path d="M0 7.500H14L7.500 0H15L25 10.500L15 21H7.500L14 13.500H0Z" fill="#000" /></Svg> },
  dart: { c: "pl-[9px] pt-[7px]", g: <Svg s={18} h={20} vb="0 0 18 20"><path d="M1 0.800L16.500 10H6Z" fill="#fff" stroke="#000" strokeWidth=".9" /><path d="M6 10H17.500L0.500 20Z" fill="#000" /></Svg> },
  cross: { c: "pl-[6px] pt-[12px]", g: <Svg s={14} h={17} vb="0 0 14 17"><path d="M3 1.500L6 1L11.500 15L9.500 15.500Z" fill="#000" /><path d="M12.500 0L13.500 1.500Q7 8 3 16L0.500 17L1.500 13Q7 8 12.500 0Z" fill="#000" /></Svg> },
  check: { c: "pl-[7px] pt-[11px]", g: <Svg s={19} h={17} vb="0 0 19 17"><path d="M0.500 8.500Q3 6.500 4.500 9.500L5 10.500Q9.500 3 16 0L18.500 0.500V3Q11 7 5.500 16Q2.500 17.500 1.500 16Z" fill="#000" /></Svg> },
};

const Preview = ({ kind, selected }) => {
  const b = bullets[kind];
  return (
    <div className="relative h-[175px] w-[145px] bg-white">
      {["h-[57px]", "h-[56px]", "h-[57px]"].map((h, k) => (
        <div key={k} className={"flex " + h}>
          <div className={"w-[37px] shrink-0 " + b.c}>{b.g}</div>
          <div className="w-[91px] pt-[20px]">
            <div className="h-[1px] bg-[#bcbcbc]" />
            <div className="mt-[18px] h-[1px] bg-[#bcbcbc]" />
          </div>
        </div>
      ))}
      {selected ? (
        <div className="absolute -inset-[1px] border-2 border-black bg-[linear-gradient(white,white)] bg-clip-border p-[1px] [background:none]">
          <div className="h-full border-2 border-black" />
        </div>
      ) : (
        <div className="absolute inset-0 border-t border-r border-b border-l border-t-[#b5b1ae] border-r-white border-b-white border-l-[#b5b1ae]">
          <div className="h-full border border-t-[#8c8885] border-r-[#f0efee] border-b-[#f0efee] border-l-[#8c8885]" />
        </div>
      )}
    </div>
  );
};

const Btn = ({ w, off, children }) => (
  <span className={"flex h-[29px] w-[83px] items-center justify-center rounded-[4px] border pt-[1px] " + (off ? "border-[#c6c4c3] bg-[#eceae9] text-[#939392]" : "border-[#b3b0ae] border-b-[#96938f] bg-linear-to-b from-white to-[#ebe9e8] text-[#4a4a49]")}>
    <Fit w={w}>{children}</Fit>
  </span>
);

const Tab = ({ w, className, children }) => (
  <span className={"flex h-full items-center border-r-2 border-[#e2e0df] pt-[1px] " + className}><Fit w={w}>{children}</Fit></span>
);

function Dialog() {
  return (
    <div className="absolute top-[288px] left-[663px] flex h-[530px] w-[637px] flex-col overflow-hidden rounded-t-[6px] bg-[#f2f1f0] text-[14px] leading-none text-[#4c4c4b]">
      <div className="flex h-[30px] shrink-0 items-center border-t border-[#6b695f] bg-linear-to-b from-[#5a574e] to-[#3d3c37] pb-[1px] pl-[6px] font-bold text-[#dfdbd2]">
        <Svg s={17} vb="0 0 17 17"><circle cx="8" cy="8.500" r="8" fill="#ea6039" stroke="#a5482b" strokeWidth=".8" /><path d="M5.500 6L10.500 11M10.500 6L5.500 11" stroke="#4a2a1c" strokeWidth="1.200" /></Svg>
        <Fit w={164} className="-mt-[1px] ml-[214px]">Bullets and Numbering</Fit>
      </div>
      <div className="mt-[8px] ml-[8px] flex h-[36px] w-[621px] shrink-0 items-end rounded-[2px] border border-[#c6c4c2] pl-[1px]">
        <span className="-mb-[1px] flex h-[34px] w-[60px] items-center rounded-t-[4px] border border-b-0 border-[#c3c1bf] bg-linear-to-b from-white to-[#f2f1f0] pb-[3px] pl-[3px]"><Fit w={48}>Bullets</Fit></span>
        <Tab w={78} className="w-[91px] pl-[5px]">Numbering</Tab>
        <Tab w={53} className="w-[64px] pl-[4px]">Outline</Tab>
        <Tab w={43} className="w-[54px] pl-[4px]">Image</Tab>
        <Tab w={57} className="w-[69px] pl-[4px]">Position</Tab>
        <Tab w={73} className="w-[83px] pl-[4px]">Customize</Tab>
      </div>
      <div className="mt-[10px] ml-[17px] font-bold"><Fit w={69}>Selection</Fit></div>
      <div className="mt-[8px] ml-[31px] grid w-max grid-cols-4 gap-[2px]">
        {["dot", "disc", "diamond", "square", "arrow", "dart", "cross", "check"].map((k) => (
          <Preview key={k} kind={k} selected={k === "dot"} />
        ))}
      </div>
      <div className="mt-auto flex items-center gap-[8px] px-[14px] pb-[14px]">
        <Btn w={32}>Help</Btn>
        <span className="flex-1" />
        <Btn w={21}>OK</Btn>
        <Btn w={54} off>Remove</Btn>
        <Btn w={45}>Cancel</Btn>
        <Btn w={38}>Reset</Btn>
      </div>
    </div>
  );
}

/* ---------- window ---------- */

const menus = [["File", 24], ["Edit", 26], ["View", 33], ["Insert", 39], ["Format", 49.5], ["Styles", 40], ["Table", 35.5], ["Form", 36], ["Tools", 35.5], ["Window", 55.5], ["Help", 30]];

export default function App() {
  return (
    <div className="relative flex h-[1080px] w-[1920px] flex-col overflow-hidden bg-[#a8a8a6] font-['Noto_Sans',sans-serif]">
      <TopPanel />
      <div className="flex flex-1">
        <Dock />
        <div className="flex w-[1877px] flex-col">
          <div className="flex h-[28px] shrink-0 items-center gap-[4px] bg-linear-to-b from-[#262522] to-[#353430] pl-[5px] text-[14px] leading-none font-semibold text-[#a09d96]">
            <Svg s={16} vb="0 0 16 16"><circle cx="8" cy="8" r="7.800" fill="#a5472b" /><path d="M5.500 5.500L10.500 10.500M10.500 5.500L5.500 10.500" stroke="#33190f" strokeWidth="1.200" /></Svg>
            <Svg s={16} vb="0 0 16 16"><circle cx="8" cy="8" r="7.800" fill="#5a5852" /><path d="M4.500 8.500H11.500" stroke="#252420" strokeWidth="1.200" /></Svg>
            <Svg s={16} vb="0 0 16 16"><circle cx="8" cy="8" r="7.800" fill="#5a5852" /><rect x="4.500" y="5.500" width="7" height="5" stroke="#252420" strokeWidth="1.200" /></Svg>
            <Fit w={216} className="ml-[765px]">Untitled 1 - LibreOffice Writer</Fit>
          </div>
          <div className="flex h-[24px] shrink-0 items-center justify-between bg-[#383631]">
            <div className="flex gap-[12.3px] pt-[2px] pl-[6px] text-[14px] leading-none text-[#96938c]">
              {menus.map(([m, w]) => <Fit key={m} w={w}>{m}</Fit>)}
            </div>
            <div className="flex h-full w-[36px] items-center justify-center bg-[#a8a8a6]">
              <Svg s={6} vb="0 0 6 6"><path d="M0.500 0.500L5.500 5.500M5.500 0.500L0.500 5.500" stroke="#2e2e2c" strokeWidth="1.200" /></Svg>
            </div>
          </div>
          <Toolbars />
          <div className="flex h-[902px] shrink-0">
            <DocArea />
            <Sidebar />
          </div>
          <StatusBar />
        </div>
      </div>
      <Dialog />
    </div>
  );
}
